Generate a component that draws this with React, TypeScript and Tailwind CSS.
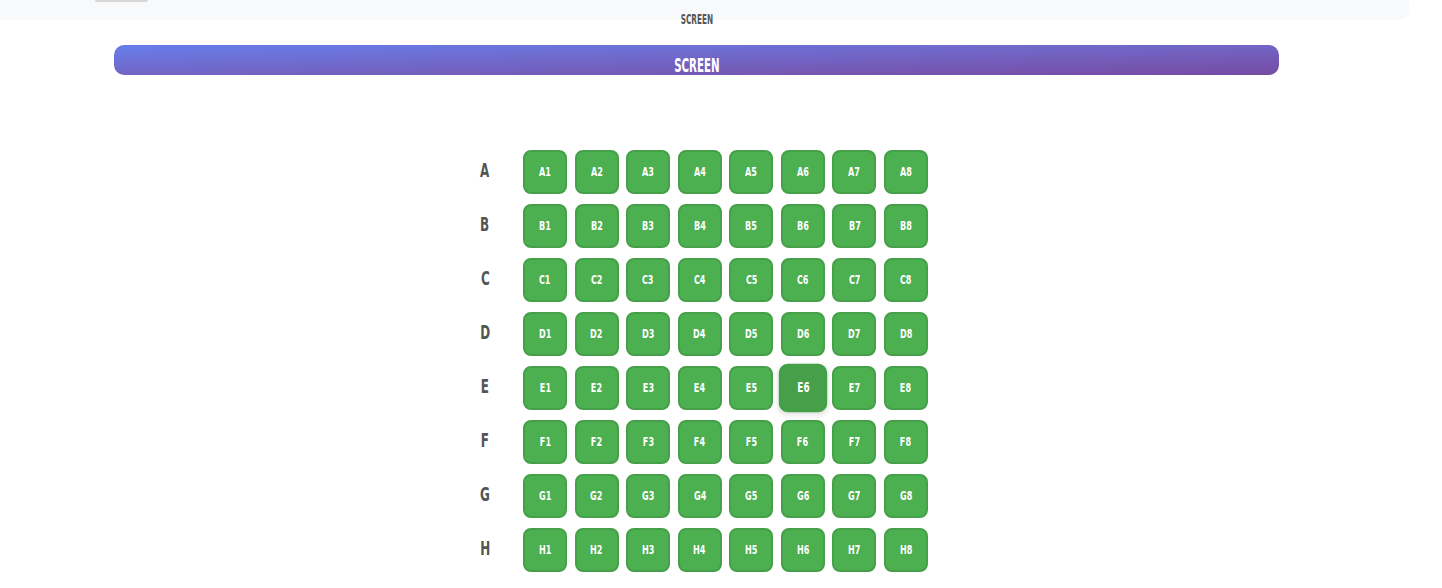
const ROWS = ["A", "B", "C", "D", "E", "F", "G", "H"];
const COLS = [1, 2, 3, 4, 5, 6, 7, 8];

const Seat = ({ id, hovered }: { id: string; hovered?: boolean }) => (
  <button
    className={`w-[44px] h-[44px] rounded-[8px] border-2 text-white text-[12px] font-bold leading-none flex items-center justify-center ${
      hovered
        ? "bg-[#45a049] border-[#43a047] scale-110 shadow-[0_2px_5px_rgba(0,0,0,0.12)]"
        : "bg-[#4caf50] border-[#45a049]"
    }`}
  >
    <span className="inline-block scale-x-[0.75]">{id}</span>
  </button>
);

export default function App() {
  return (
    <div className="min-h-screen bg-white font-['DejaVu_Sans_Condensed','Liberation_Sans',sans-serif]">
      {/* top panel, scrolled mostly out of view */}
      <div className="w-[1409px] h-[20px] bg-[#f8f9fa] rounded-br-[10px]">
        <div className="ml-[95px] w-[53px] h-[2px] bg-[#d6d6d6] rounded-b-[2px]" />
      </div>
      <div className="w-[1393px] -mt-[9px] text-center text-[14px] leading-[16px] font-bold text-[#555]">
        <span className="inline-block scale-x-[0.58]">SCREEN</span>
      </div>

      {/* screen bar */}
      <div className="ml-[114px] mt-[18px] w-[1165px] h-[30px] rounded-[10px] bg-gradient-to-br from-[#667eea] to-[#764ba2] flex justify-center pt-[10px]">
        <span className="inline-block scale-x-[0.6] text-white text-[19px] leading-[20px] font-bold">SCREEN</span>
      </div>

      {/* seat map */}
      <div className="mt-[75px] ml-[469px] flex flex-col gap-[10px]">
        {ROWS.map((row) => (
          <div key={row} className="flex items-center">
            <div className="w-[32px] -mt-[4px] text-center text-[19px] font-bold text-[#555]">
              <span className="inline-block scale-x-[0.7]">{row}</span>
            </div>
            <div className="ml-[22px] flex gap-[7.57px]">
              {COLS.map((n) => (
                <Seat key={n} id={`${row}${n}`} hovered={row === "E" && n === 6} />
              ))}
            </div>
          </div>
        ))}
      </div>
    </div>
  );
}
